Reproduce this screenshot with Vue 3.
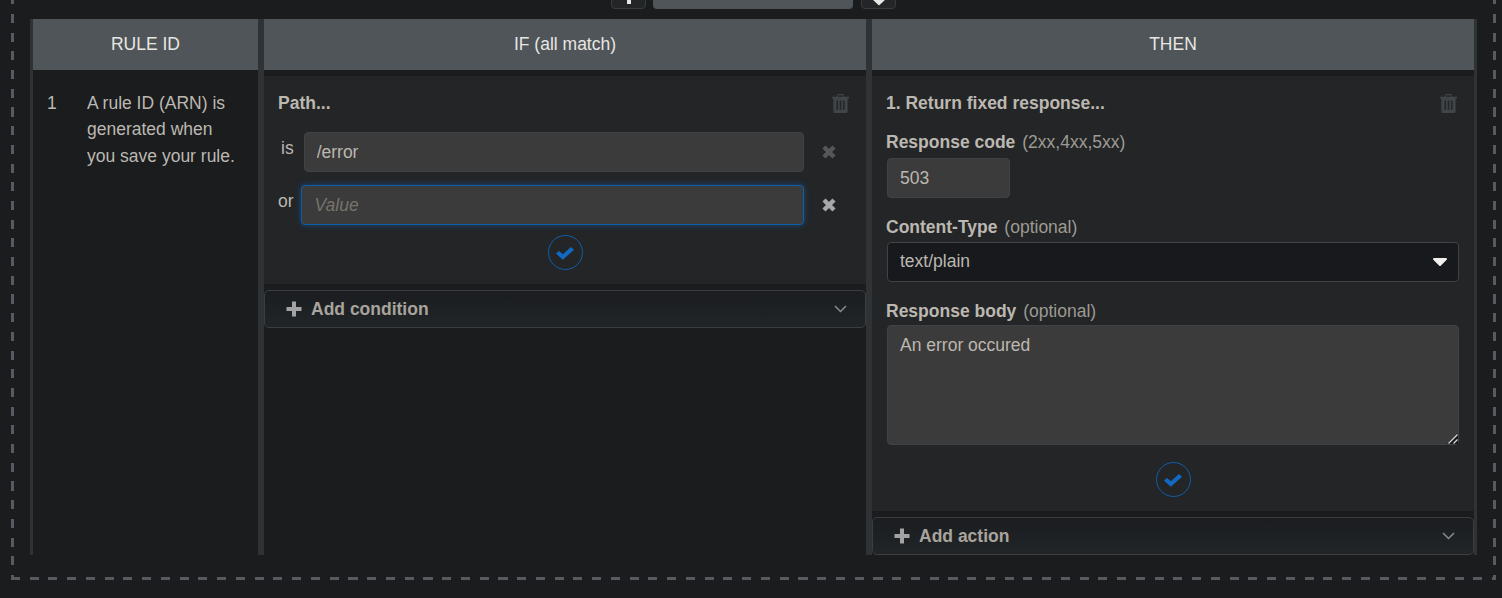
<template>
  <div class="page">
    <div class="zone">
      <div class="toolbar">
        <button class="tool-btn">
          <svg width="14" height="9" viewBox="0 0 14 9"><path d="M5 0h4v5H5z" fill="#e8e6e3" /></svg>
        </button>
        <div class="tool-wide"></div>
        <button class="tool-btn">
          <svg width="16" height="9" viewBox="0 0 16 9"><path d="M1 0h14L8.600 5.900a.8.8 0 0 1-1.200 0z" fill="#e8e6e3" /></svg>
        </button>
      </div>

      <div class="rules">
        <div class="head">RULE ID</div>
        <div class="head">IF (all match)</div>
        <div class="head">THEN</div>

        <div class="cell rule-cell">
          <span class="rule-num">1</span>
          <p class="rule-text">A rule ID (ARN) is generated when you save your rule.</p>
        </div>

        <div class="cell col">
          <div class="panel if-panel">
            <div class="panel-title">
              <strong>Path...</strong>
              <svg class="trash" width="17" height="19" viewBox="0 0 16 19" preserveAspectRatio="none">
                <path :d="trashPath" fill="#424548" fill-rule="evenodd" />
              </svg>
            </div>
            <div class="cond first">
              <span class="cond-label is">is</span>
              <input class="field" type="text" value="/error" readonly />
              <svg class="remove" width="14" height="14" viewBox="0 0 14 14">
                <path :d="crossPath" stroke="#55585a" stroke-width="4.400" />
              </svg>
            </div>
            <div class="cond second">
              <span class="cond-label or">or</span>
              <input class="field focused" type="text" placeholder="Value" readonly />
              <svg class="remove" width="14" height="14" viewBox="0 0 14 14">
                <path :d="crossPath" stroke="#a8a8a8" stroke-width="4.400" />
              </svg>
            </div>
            <div class="confirm if-confirm">
              <svg width="18" height="14" viewBox="0 0 16 14" preserveAspectRatio="none"><path :d="checkPath" /></svg>
            </div>
          </div>
          <div class="add-box">
            <svg width="16" height="16" viewBox="0 0 16 16"><path :d="plusPath" fill="#a3a3a3" /></svg>
            <span>Add condition</span>
            <svg class="chevron" width="13" height="8" viewBox="0 0 13 8"><path d="M1 1l5.500 5.500L12 1" /></svg>
          </div>
        </div>

        <div class="cell col">
          <div class="panel then-panel">
            <div class="panel-title">
              <strong>1. Return fixed response...</strong>
              <svg class="trash" width="17" height="19" viewBox="0 0 16 19" preserveAspectRatio="none">
                <path :d="trashPath" fill="#424548" fill-rule="evenodd" />
              </svg>
            </div>
            <label class="form-label code-label"><b>Response code</b> <span>(2xx,4xx,5xx)</span></label>
            <input class="field code" type="text" value="503" readonly />
            <label class="form-label"><b>Content-Type</b> <span>(optional)</span></label>
            <div class="select">
              <span class="select-value">text/plain</span>
              <svg width="14" height="8" viewBox="0 0 14 8"><path d="M1 0h12a1 1 0 0 1 .7 1.700L7.700 7.700a1 1 0 0 1-1.400 0L.3 1.700A1 1 0 0 1 1 0z" fill="#f0efed" /></svg>
            </div>
            <label class="form-label body-label"><b>Response body</b> <span>(optional)</span></label>
            <div class="body-wrap">
              <textarea class="field body" readonly>An error occured</textarea>
              <svg class="grip" width="11" height="11" viewBox="0 0 11 11">
                <path d="M11 0v11H0z" fill="#17191c" />
                <path d="M1.500 10.500l9-9M6.500 10.500l4-4" stroke="#d8d8d8" stroke-width="1.300" fill="none" />
              </svg>
            </div>
            <div class="confirm then-confirm">
              <svg width="18" height="14" viewBox="0 0 16 14" preserveAspectRatio="none"><path :d="checkPath" /></svg>
            </div>
          </div>
          <div class="add-box">
            <svg width="16" height="16" viewBox="0 0 16 16"><path :d="plusPath" fill="#a3a3a3" /></svg>
            <span>Add action</span>
            <svg class="chevron" width="13" height="8" viewBox="0 0 13 8"><path d="M1 1l5.500 5.500L12 1" /></svg>
          </div>
        </div>
      </div>
    </div>
  </div>
</template>

<script setup>
const crossPath = 'M2 2l10 10M12 2L2 12'
const checkPath = 'M0 7.600l2.700-2.700 3.400 3.400 7.200-7.200L16 3.800 6.100 13.700z'
const plusPath = 'M6 .5h4V6h5.500v4H10v5.500H6V10H.5V6H6z'
const trashPath =
  'M5.500 0h5l1.300 2.800H16v1.700h-1.300V17.500a1.500 1.500 0 0 1-1.500 1.500H2.800a1.500 1.500 0 0 1-1.500-1.500V4.500H0V2.800h4.200zM6 1.200l-.6 1.600h5.200L10 1.200zM4.200 6.500v9.500h1.500V6.500zM7.250 6.500v9.500h1.500V6.500zM10.300 6.500v9.500h1.500V6.500z'
</script>

<style>
html,
body {
  background: #1a1c1e;
}
</style>

<style scoped>
.page {
  height: 598px;
  overflow: hidden;
  background: #1a1c1e;
  font-family: 'Liberation Sans', Arial, sans-serif;
  font-size: 17.500px;
  color: #bcb8b1;
}

/* dashes are longer than a css dashed border would draw them */
.zone {
  height: 580px;
  margin: 0 6px 0 11px;
  padding: 0 19px;
  background:
    repeating-linear-gradient(to bottom, #555b60 -4.700px 4.300px, transparent 4.300px 14px) left top / 3px 100% no-repeat,
    repeating-linear-gradient(to bottom, #555b60 -4.700px 4.300px, transparent 4.300px 14px) right top / 3px 100% no-repeat,
    repeating-linear-gradient(to right, #555b60 0 9px, transparent 9px 18.750px) left bottom / 100% 3px no-repeat;
}

.toolbar {
  height: 9px;
  margin-bottom: 10px;
  display: flex;
  justify-content: center;
  gap: 7px;
  align-items: flex-end;
}

.tool-btn {
  width: 35px;
  height: 30px;
  padding: 0;
  display: flex;
  align-items: flex-end;
  justify-content: center;
  background: #232527;
  border: 1px solid #383c3f;
  border-radius: 4px;
}

.tool-wide {
  width: 200px;
  height: 30px;
  margin-right: 1px;
  background: #4f5559;
  border-radius: 4px;
}

.rules {
  height: 536px;
  display: grid;
  grid-template-columns: 225px 602px 602px;
  grid-template-rows: 51px 1fr;
  column-gap: 6px;
  background: #303336;
  border-left: 3px solid #303336;
  border-right: 3px solid #303336;
}

.head {
  display: flex;
  align-items: center;
  justify-content: center;
  background: #4f5559;
  color: #e8e6e3;
}

.cell {
  background: #1a1c1e;
}

.rule-cell {
  display: flex;
  padding: 19.600px 14px 0;
  line-height: 26.500px;
}

.rule-num {
  width: 40px;
  flex: none;
}

.rule-text {
  margin: 0;
}

.col {
  display: flex;
  flex-direction: column;
  padding-top: 6px;
  gap: 6px;
}

.panel {
  box-sizing: border-box;
  background: #232527;
  padding: 14px 14px 0;
}

.if-panel {
  height: 208px;
}

.then-panel {
  height: 435px;
}

.panel-title {
  display: flex;
  justify-content: space-between;
  align-items: center;
  height: 26px;
  padding-right: 3px;
}

.cond {
  display: flex;
  align-items: center;
}

.cond.first {
  margin-top: 16px;
}

.cond.second {
  margin-top: 13px;
}

.cond-label {
  margin-bottom: 8px;
}

.cond-label.is {
  margin-left: 3px;
  margin-right: 10px;
}

.cond-label.or {
  margin-right: 7px;
}

.field {
  box-sizing: border-box;
  display: block;
  height: 40px;
  padding: 0 12px;
  background: #3b3b3b;
  border: 1px solid #3f4346;
  border-radius: 4px;
  color: #bcb8b1;
  font: inherit;
  outline: none;
}

.cond .field {
  flex: 1;
  min-width: 0;
}

.field.focused {
  padding: 0 13px;
  border-color: #0f5ea8;
  box-shadow: 0 0 6px rgba(20, 100, 180, 0.6);
}

.field::placeholder {
  color: #77736d;
  font-style: italic;
  opacity: 1;
}

.remove {
  flex: none;
  margin: 0 16px 0 18px;
}

.confirm {
  box-sizing: border-box;
  width: 35px;
  height: 35px;
  margin-left: auto;
  margin-right: auto;
  display: flex;
  align-items: center;
  justify-content: center;
  border: 1.200px solid #0f5ea8;
  border-radius: 50%;
}

.confirm path {
  fill: #1169c4;
}

.if-confirm {
  margin-top: 10px;
}

.then-confirm {
  margin-top: 17px;
}

.add-box {
  box-sizing: border-box;
  height: 38px;
  display: flex;
  align-items: center;
  padding: 0 18px 0 21px;
  border: 1px solid #3a3e41;
  border-radius: 5px;
  background: linear-gradient(to bottom, #1b1d20, #212527);
  color: #a8a49d;
  font-weight: bold;
}

.add-box > span {
  margin-left: 9px;
}

.chevron {
  margin-left: auto;
}

.chevron path {
  fill: none;
  stroke: #8a8a8a;
  stroke-width: 1.500;
}

.form-label {
  display: block;
  height: 26px;
  line-height: 26px;
  margin-top: 16px;
}

.code-label {
  margin-top: 13px;
}

.form-label b {
  margin-right: 2px;
}

.form-label span {
  color: #9e9a93;
}

.field.code {
  width: 123px;
  margin-left: 1px;
  margin-top: 3px;
}

.select {
  box-sizing: border-box;
  height: 40px;
  margin: 2px 1px 0;
  padding: 0 11px 0 12px;
  display: flex;
  align-items: center;
  justify-content: space-between;
  background: #17191c;
  border: 1px solid #3f4346;
  border-radius: 4px;
}

.select-value {
  margin-bottom: 2px;
}

.body-wrap {
  position: relative;
  width: 572px;
  margin: 1px 0 0 1px;
}

.field.body {
  width: 100%;
  height: 120px;
  padding: 8px 12px;
  line-height: 22px;
  resize: none;
}

.grip {
  position: absolute;
  right: 1px;
  bottom: 1px;
}
</style>
